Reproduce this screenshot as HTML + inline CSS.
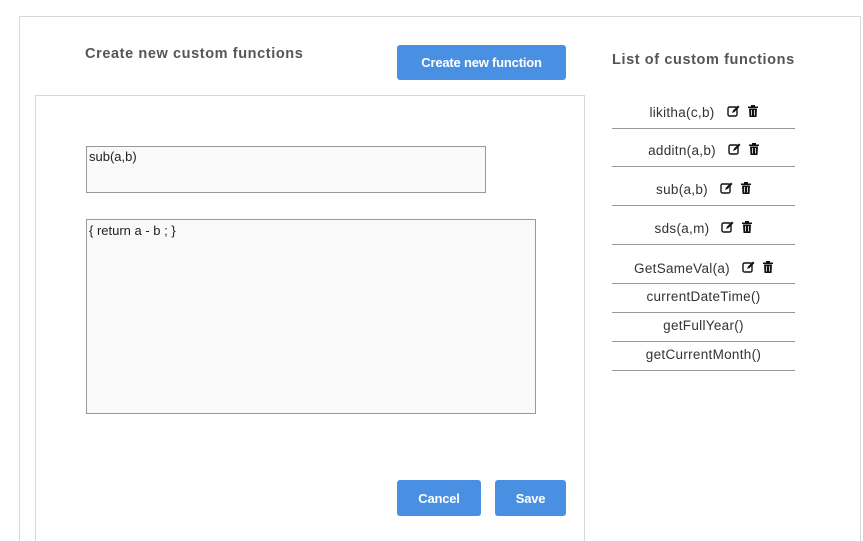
<!DOCTYPE html>
<html style="overflow:hidden"><head><style>
html,body{overflow:hidden}
body{margin:0;width:863px;height:541px;background:#fff;position:relative;overflow:hidden;font-family:"Liberation Sans",Arial,sans-serif}
.a{position:absolute}
.btn{position:absolute;background:#4a90e2;color:#fff;border-radius:3px;font-weight:bold;font-size:13px;display:flex;align-items:center;justify-content:center;letter-spacing:-0.2px}
.h{font-weight:bold;font-size:14.5px;color:#555;letter-spacing:0.6px}
.it{position:absolute;left:612px;width:183px;border-bottom:1px solid #999;font-size:13.5px;color:#333;letter-spacing:0.3px;display:flex;justify-content:center;align-items:center}
.ic{display:inline-block;margin-left:12px}
</style></head><body>
<div class="a" style="left:19px;top:16px;width:840px;height:530px;border:1px solid #d8d8d8;border-bottom:none"></div>
<div class="a h" style="left:85px;top:46px">Create new custom functions</div>
<div class="btn" style="left:397px;top:45px;width:169px;height:35px">Create new function</div>
<div class="a h" style="left:612px;top:52px">List of custom functions</div>
<div class="a" style="left:35px;top:95px;width:548px;height:450px;border:1px solid #d8d8d8;border-bottom:none"></div>
<div class="a" style="left:86px;top:146px;border:1px solid #999;background:#f9f9f9;font-size:13px;color:#222;padding:2px 0 0 2px;box-sizing:border-box;width:400px;height:47px">sub(a,b)</div>
<div class="a" style="left:86px;top:219px;width:450px;height:195px;border:1px solid #999;background:#f9f9f9;font-size:13px;color:#222;padding:3px 0 0 2px;box-sizing:border-box">{ return a - b ; }</div>
<div class="btn" style="left:397px;top:480px;width:84px;height:36px">Cancel</div>
<div class="btn" style="left:495px;top:480px;width:71px;height:36px">Save</div>

<div class="it" style="top:96px;height:32px">likitha(c,b)<span class="ic"><svg width="13" height="12" viewBox="0 0 13 12"><rect x="1" y="2" width="9" height="9" rx="1.5" fill="none" stroke="#111" stroke-width="1.4"/><path d="M5 8 L6 5.5 L11 0.5 L12.5 2 L7.5 7 Z" fill="#111"/></svg></span><span class="ic" style="margin-left:8px"><svg width="10" height="12" viewBox="0 0 10 12"><rect x="0" y="1.5" width="10" height="1.5" fill="#111"/><rect x="3" y="0" width="4" height="2" fill="#111"/><path d="M1 3.5 H9 L8.5 12 H1.5 Z" fill="#111"/><path d="M3.5 5 V10.5 M6.5 5 V10.5" stroke="#fff" stroke-width="0.8"/></svg></span></div>
<div class="it" style="top:129px;height:38px;padding-top:5px;box-sizing:border-box">additn(a,b)<span class="ic"><svg width="13" height="12" viewBox="0 0 13 12"><rect x="1" y="2" width="9" height="9" rx="1.5" fill="none" stroke="#111" stroke-width="1.4"/><path d="M5 8 L6 5.5 L11 0.5 L12.5 2 L7.5 7 Z" fill="#111"/></svg></span><span class="ic" style="margin-left:8px"><svg width="10" height="12" viewBox="0 0 10 12"><rect x="0" y="1.5" width="10" height="1.5" fill="#111"/><rect x="3" y="0" width="4" height="2" fill="#111"/><path d="M1 3.5 H9 L8.5 12 H1.5 Z" fill="#111"/><path d="M3.5 5 V10.5 M6.5 5 V10.5" stroke="#fff" stroke-width="0.8"/></svg></span></div>
<div class="it" style="top:168px;height:38px;padding-top:5px;box-sizing:border-box">sub(a,b)<span class="ic"><svg width="13" height="12" viewBox="0 0 13 12"><rect x="1" y="2" width="9" height="9" rx="1.5" fill="none" stroke="#111" stroke-width="1.4"/><path d="M5 8 L6 5.5 L11 0.5 L12.5 2 L7.5 7 Z" fill="#111"/></svg></span><span class="ic" style="margin-left:8px"><svg width="10" height="12" viewBox="0 0 10 12"><rect x="0" y="1.5" width="10" height="1.5" fill="#111"/><rect x="3" y="0" width="4" height="2" fill="#111"/><path d="M1 3.5 H9 L8.5 12 H1.5 Z" fill="#111"/><path d="M3.5 5 V10.5 M6.5 5 V10.5" stroke="#fff" stroke-width="0.8"/></svg></span></div>
<div class="it" style="top:207px;height:38px;padding-top:5px;box-sizing:border-box">sds(a,m)<span class="ic"><svg width="13" height="12" viewBox="0 0 13 12"><rect x="1" y="2" width="9" height="9" rx="1.5" fill="none" stroke="#111" stroke-width="1.4"/><path d="M5 8 L6 5.5 L11 0.5 L12.5 2 L7.5 7 Z" fill="#111"/></svg></span><span class="ic" style="margin-left:8px"><svg width="10" height="12" viewBox="0 0 10 12"><rect x="0" y="1.5" width="10" height="1.5" fill="#111"/><rect x="3" y="0" width="4" height="2" fill="#111"/><path d="M1 3.5 H9 L8.5 12 H1.5 Z" fill="#111"/><path d="M3.5 5 V10.5 M6.5 5 V10.5" stroke="#fff" stroke-width="0.8"/></svg></span></div>
<div class="it" style="top:246px;height:38px;padding-top:7px;box-sizing:border-box">GetSameVal(a)<span class="ic"><svg width="13" height="12" viewBox="0 0 13 12"><rect x="1" y="2" width="9" height="9" rx="1.5" fill="none" stroke="#111" stroke-width="1.4"/><path d="M5 8 L6 5.5 L11 0.5 L12.5 2 L7.5 7 Z" fill="#111"/></svg></span><span class="ic" style="margin-left:8px"><svg width="10" height="12" viewBox="0 0 10 12"><rect x="0" y="1.5" width="10" height="1.5" fill="#111"/><rect x="3" y="0" width="4" height="2" fill="#111"/><path d="M1 3.5 H9 L8.5 12 H1.5 Z" fill="#111"/><path d="M3.5 5 V10.5 M6.5 5 V10.5" stroke="#fff" stroke-width="0.8"/></svg></span></div>
<div class="it" style="top:285px;height:28px;padding-bottom:4px;box-sizing:border-box">currentDateTime()</div>
<div class="it" style="top:314px;height:28px;padding-bottom:4px;box-sizing:border-box">getFullYear()</div>
<div class="it" style="top:343px;height:28px;padding-bottom:4px;box-sizing:border-box">getCurrentMonth()</div>
</body></html>
